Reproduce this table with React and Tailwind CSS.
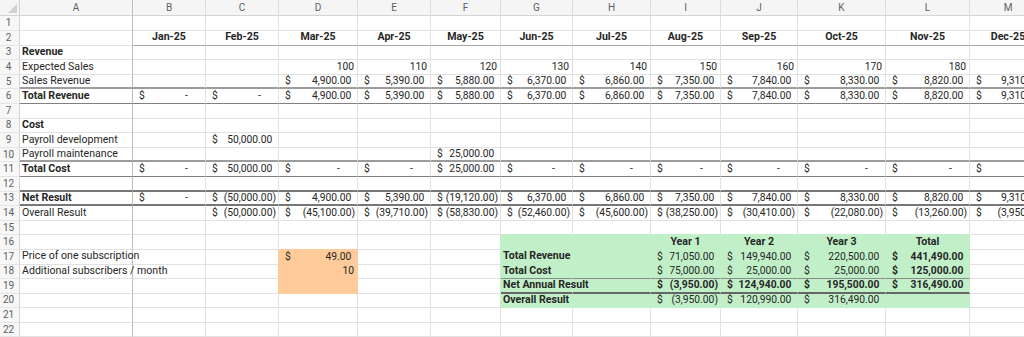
import React from "react";

const COLS = ["A", "B", "C", "D", "E", "F", "G", "H", "I", "J", "K", "L", "M", "N"];
const MONTHS = ["Jan-25", "Feb-25", "Mar-25", "Apr-25", "May-25", "Jun-25", "Jul-25", "Aug-25", "Sep-25", "Oct-25", "Nov-25", "Dec-25"];
const DM = ["D", "E", "F", "G", "H", "I", "J", "K", "L", "M"];
const REV = ["4,900.00", "5,390.00", "5,880.00", "6,370.00", "6,860.00", "7,350.00", "7,840.00", "8,330.00", "8,820.00", "9,310.00"];
const OVERALL = ["(50,000.00)", "(45,100.00)", "(39,710.00)", "(58,830.00)", "(52,460.00)", "(45,600.00)", "(38,250.00)", "(30,410.00)", "(22,080.00)", "(13,260.00)", "(3,950.00)"];

const fromList = (cols, vals, prefix = "") =>
  Object.fromEntries(cols.map((c, i) => [c, prefix + vals[i]]));

// "*" bold, "^" centered, "$" accounting format
const ROWS = {
  1: {},
  2: fromList(COLS.slice(1, 13), MONTHS, "^*"),
  3: { A: "*Revenue" },
  4: { A: "Expected Sales", ...fromList(DM, ["100", "110", "120", "130", "140", "150", "160", "170", "180", "190"]) },
  5: { A: "Sales Revenue", ...fromList(DM, REV, "$") },
  6: { A: "*Total Revenue", B: "$-", C: "$-", ...fromList(DM, REV, "$") },
  7: {},
  8: { A: "*Cost" },
  9: { A: "Payroll development", C: "$50,000.00" },
  10: { A: "Payroll maintenance", F: "$25,000.00" },
  11: {
    A: "*Total Cost",
    B: "$-",
    C: "$50,000.00",
    D: "$-",
    E: "$-",
    F: "$25,000.00",
    G: "$-",
    H: "$-",
    I: "$-",
    J: "$-",
    K: "$-",
    L: "$-",
    M: "$-",
  },
  12: {},
  13: {
    A: "*Net Result",
    B: "$-",
    C: "$(50,000.00)",
    ...fromList(DM, REV, "$"),
    F: "$(19,120.00)",
  },
  14: { A: "Overall Result", ...fromList(COLS.slice(2, 13), OVERALL, "$") },
  15: {},
  16: { I: "^*Year 1", J: "^*Year 2", K: "^*Year 3", L: "^*Total" },
  17: {
    A: "Price of one subscription",
    D: "$49.00",
    G: "*Total Revenue",
    I: "$71,050.00",
    J: "$149,940.00",
    K: "$220,500.00",
    L: "*$441,490.00",
  },
  18: {
    A: "Additional subscribers / month",
    D: "10",
    G: "*Total Cost",
    I: "$75,000.00",
    J: "$25,000.00",
    K: "$25,000.00",
    L: "*$125,000.00",
  },
  19: {
    G: "*Net Annual Result",
    I: "*$(3,950.00)",
    J: "*$124,940.00",
    K: "*$195,500.00",
    L: "*$316,490.00",
  },
  20: { G: "*Overall Result", I: "$(3,950.00)", J: "$120,990.00", K: "$316,490.00" },
  21: {},
  22: {},
};

function fillOf(r, ci) {
  if (ci === 3 && r >= 17 && r <= 19) return "o";
  if (ci >= 6 && ci <= 11 && r >= 16 && r <= 20) return "g";
  return null;
}

const BG = { g: "bg-[#c1f0c8]", o: "bg-[#ffcb9a]" };
const BR = { g: "border-r-[#c1f0c8]", o: "border-r-[#ffcb9a]" };
const BB = { g: "border-b-[#c1f0c8]", o: "border-b-[#ffcb9a]" };

function bottomClass(r, ci) {
  const inSummary = ci >= 6 && ci <= 11;
  if (r === 18 && inSummary) return "border-b-[#8c8c8c]";
  if (r === 19 && inSummary) return "border-b-2 border-b-[#666666]";
  const f = fillOf(r, ci) || fillOf(r + 1, ci);
  if (f) return BB[f];
  if (r === 2 && ci > 0) return "border-b-[#a8a8a8]";
  if (r === 5 || r === 10) return "border-b-2 border-b-[#9c9c9c]";
  if (r === 6 || r === 11) return "border-b-[#808080]";
  if (r === 12 || r === 13) return "border-b-2 border-b-[#777777]";
  return "border-b-[#e1e1e1]";
}

function rightClass(r, ci) {
  const f = fillOf(r, ci) || fillOf(r, ci + 1);
  if (f) return BR[f];
  if (ci === 0) return "border-r-[#bdbdbd]";
  return "border-r-[#e1e1e1]";
}

function Value({ v }) {
  if (!v) return null;
  let bold = false;
  let center = false;
  while (v[0] === "*" || v[0] === "^") {
    if (v[0] === "*") bold = true;
    if (v[0] === "^") center = true;
    v = v.slice(1);
  }
  const weight = bold ? "font-bold" : "";

  if (v[0] === "$") {
    const n = v.slice(1);
    return (
      <div className={`flex w-full justify-between pl-[4px] text-[10.3px] ${weight}`}>
        <span>$</span>
        {n === "-" ? (
          <span>
            -<span className="invisible">00)</span>
          </span>
        ) : (
          <span>
            {n}
            {n[0] !== "(" && <span className="invisible">)</span>}
          </span>
        )}
      </div>
    );
  }

  if (/^[\d,.]+$/.test(v)) {
    return <div className={`w-full text-right pr-[1px] text-[10.3px] ${weight}`}>{v}</div>;
  }

  // labels spill over into the empty cells on their right, as in Excel
  return <div className={`relative z-10 w-full ${center ? "text-center" : ""} ${weight}`}>{v}</div>;
}

export default function App() {
  const rowNums = Array.from({ length: 22 }, (_, i) => i + 1);

  return (
    <div className="w-[1024px] h-[337px] overflow-hidden bg-white font-['Roboto',sans-serif] text-[10.6px] leading-none text-[#262626]">
      <div className="grid w-max grid-cols-[20px_113px_73px_73px_79px_73px_70px_72px_78px_70px_77px_88px_84px_77px_80px]">
        {/* column header */}
        <div className="relative h-[16px] bg-[#f5f5f5] border-r border-b border-r-[#d4d4d4] border-b-[#d4d4d4]">
          <svg className="absolute right-[2px] bottom-[2px]" width="9" height="9" viewBox="0 0 9 9">
            <path d="M9 0 L9 9 L0 9 Z" fill="#d0d0d0" />
          </svg>
        </div>
        {COLS.map((c, ci) => (
          <div
            key={c}
            className={`h-[16px] flex items-center justify-center bg-[#f5f5f5] border-b border-b-[#d4d4d4] border-r text-[10px] text-[#5f5f5f] ${
              ci === 0 ? "border-r-[#bdbdbd]" : "border-r-[#dcdcdc]"
            }`}
          >
            {c}
          </div>
        ))}

        {rowNums.map((r) => {
          const h = r === 2 ? "h-[15px]" : "h-[14.6px]";
          const data = ROWS[r] || {};
          return (
            <React.Fragment key={r}>
              <div
                className={`${h} flex items-center justify-center pr-[2px] bg-[#f7f7f7] border-r border-b border-r-[#d4d4d4] border-b-[#e6e6e6] text-[10px] text-[#5f5f5f]`}
              >
                {r}
              </div>
              {COLS.map((c, ci) => {
                const f = fillOf(r, ci);
                return (
                  <div
                    key={c}
                    className={`${h} flex items-center whitespace-nowrap px-[2px] border-r border-b ${
                      f ? BG[f] : ""
                    } ${rightClass(r, ci)} ${bottomClass(r, ci)}`}
                  >
                    <Value v={data[c]} />
                  </div>
                );
              })}
            </React.Fragment>
          );
        })}
      </div>
    </div>
  );
}
